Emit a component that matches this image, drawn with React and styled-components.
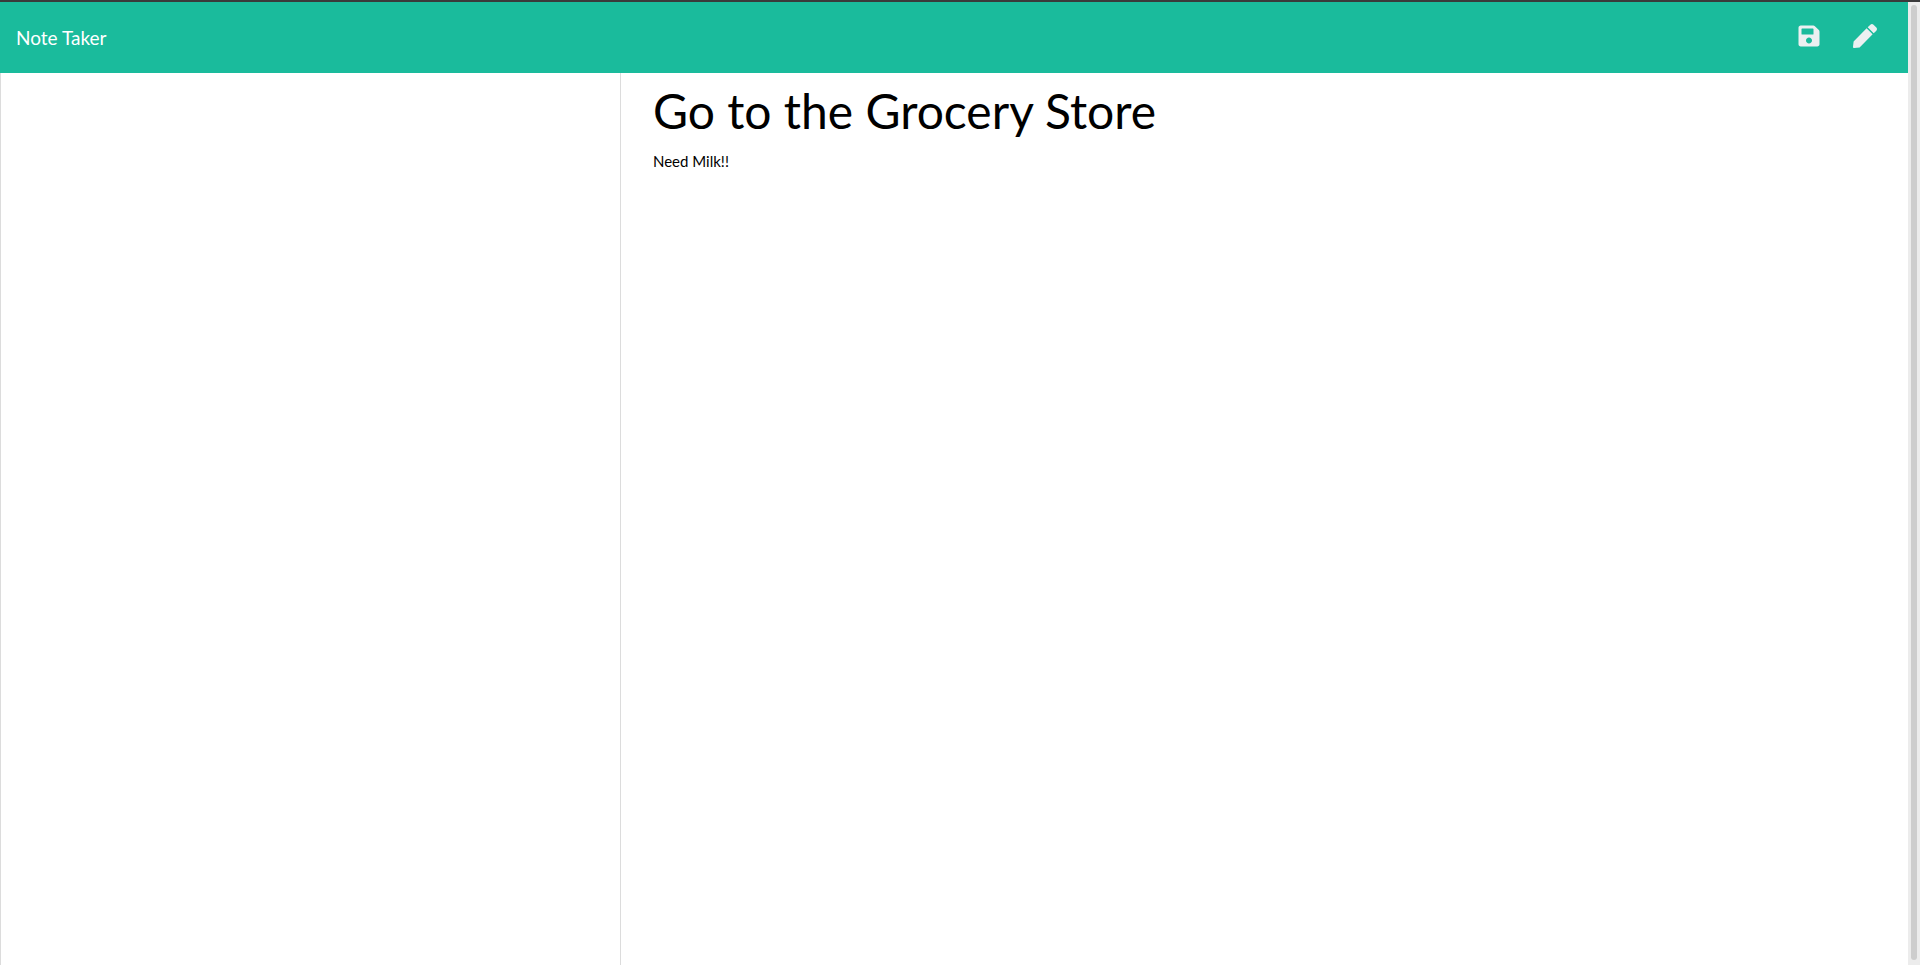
import React from "react";
import styled, { createGlobalStyle } from "styled-components";
import { FaSave, FaPen } from "react-icons/fa";

const GlobalStyle = createGlobalStyle`
  *, *::before, *::after { box-sizing: border-box; }
  body {
    margin: 0;
    background: #fff;
    color: #000;
    font-family: Lato, "Liberation Sans", sans-serif;
    font-size: 15px;
    line-height: 22px;
  }
`;

const Window = styled.div`
  display: flex;
  min-height: 100vh;
  border-top: 2px solid #3a3a3b;
`;

const Page = styled.div`
  display: flex;
  flex: 1;
  flex-direction: column;
`;

const ScrollTrack = styled.div`
  display: flex;
  width: 12px;
  padding: 3px 3px 5px;
  background: #ececec;
`;

const ScrollThumb = styled.div`
  flex: 1;
  border-radius: 3px;
  background: #cdcdcd;
`;

const Navbar = styled.nav`
  display: flex;
  align-items: center;
  justify-content: space-between;
  height: 71px;
  padding: 0 15px 0 16px;
  background: #1abb9c;
`;

const Brand = styled.a`
  color: #fff;
  font-size: 19px;
  line-height: 28px;
  text-decoration: none;
`;

const Actions = styled.div`
  display: flex;
  align-items: center;
`;

const IconButton = styled.button`
  display: flex;
  padding: 0 16px 4px;
  border: 0;
  background: transparent;
  color: #ecf0f1;
  cursor: pointer;

  svg {
    width: auto;
    height: 24px;
  }
`;

const Main = styled.main`
  display: flex;
  flex: 1;
`;

const NoteList = styled.aside`
  flex: 0 0 calc(100% / 3 - 15px);
  border: solid #dcdcdc;
  border-width: 0 1px;
`;

const Editor = styled.form`
  display: flex;
  flex: 1;
  flex-direction: column;
  padding: 8px 30px;
`;

const TitleInput = styled.input`
  width: 100%;
  height: 60px;
  padding: 0 2px;
  border: 0;
  outline: 0;
  background: transparent;
  color: #000;
  font: 48px/60px Lato, "Liberation Sans", sans-serif;
`;

const NoteText = styled.textarea`
  flex: 1;
  width: 100%;
  padding: 9px 2px;
  border: 0;
  outline: 0;
  resize: none;
  background: transparent;
  color: #000;
  font: 15px/22px Lato, "Liberation Sans", sans-serif;
`;

export default function App() {
  return (
    <Window>
      <GlobalStyle />
      <Page>
        <Navbar>
          <Brand href="#">Note Taker</Brand>
          <Actions>
            <IconButton type="submit" form="note" aria-label="Save note">
              <FaSave />
            </IconButton>
            <IconButton type="button" aria-label="New note">
              <FaPen />
            </IconButton>
          </Actions>
        </Navbar>
        <Main>
          <NoteList aria-label="Saved notes" />
          <Editor id="note" onSubmit={(event) => event.preventDefault()}>
            <TitleInput aria-label="Note title" defaultValue="Go to the Grocery Store" />
            <NoteText aria-label="Note text" defaultValue="Need Milk!!" />
          </Editor>
        </Main>
      </Page>
      <ScrollTrack aria-hidden="true">
        <ScrollThumb />
      </ScrollTrack>
    </Window>
  );
}
